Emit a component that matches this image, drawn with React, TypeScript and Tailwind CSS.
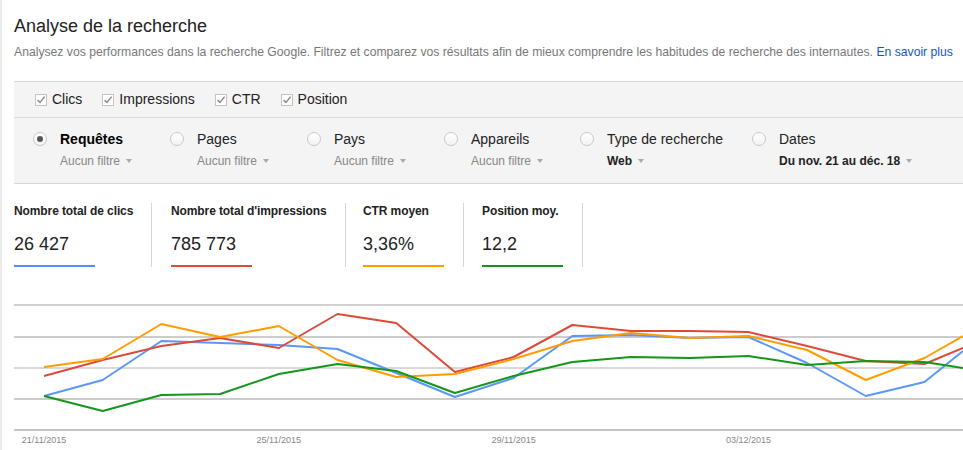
import React from "react";

const metrics = ["Clics", "Impressions", "CTR", "Position"];

const dims = [
  { label: "Requêtes", value: "Aucun filtre", selected: true, w: "w-[137px]" },
  { label: "Pages", value: "Aucun filtre", w: "w-[137px]" },
  { label: "Pays", value: "Aucun filtre", w: "w-[137px]" },
  { label: "Appareils", value: "Aucun filtre", w: "w-[136px]" },
  { label: "Type de recherche", value: "Web", strong: true, w: "w-[172px]" },
  { label: "Dates", value: "Du nov. 21 au déc. 18", strong: true, w: "w-[200px]" },
];

const stats = [
  { label: "Nombre total de clics", value: "26 427", color: "border-[#4d90fe]", box: "w-[118px] pr-[19px]" },
  { label: "Nombre total d'impressions", value: "785 773", color: "border-[#dd4b39]", box: "w-[154px] pl-[19px] pr-[20px]" },
  { label: "CTR moyen", value: "3,36%", color: "border-[#ff9900]", box: "w-[81px] pl-[17px] pr-[19px]" },
  { label: "Position moy.", value: "12,2", color: "border-[#109618]", box: "w-[81px] pl-[18px] pr-[19px]" },
];

// screen y values, last one is the value at the right edge
const series = [
  { color: "#5b97f7", ys: [397, 381, 342, 344, 346, 350, 374, 398, 379, 337, 336, 339, 338, 364, 397, 383, 352] },
  { color: "#dc4b3a", ys: [377, 361, 347, 339, 349, 315, 324, 373, 358, 326, 332, 332, 333, 347, 362, 365, 349] },
  { color: "#ff9c00", ys: [368, 360, 325, 338, 327, 361, 378, 375, 360, 342, 334, 339, 337, 351, 381, 359, 337] },
  { color: "#15961b", ys: [397, 412, 396, 395, 375, 365, 372, 394, 377, 363, 358, 359, 357, 366, 362, 363, 369] },
];

const xAt = (i: number) => (i === 16 ? 949 : 30 + 58.7 * i);

function Checkbox() {
  return (
    <svg width="12" height="12" viewBox="0 0 12 12" className="shrink-0">
      <rect x="0.5" y="0.5" width="11" height="11" fill="#fff" stroke="#c4c4c4" />
      <path d="M2.6 6.1 L5 8.4 L9.6 2.6" stroke="#8e8e8e" strokeWidth="1.5" fill="none" />
    </svg>
  );
}

function Radio({ on }: { on?: boolean }) {
  return (
    <div className="mt-[2px] flex h-[14px] w-[14px] shrink-0 items-center justify-center rounded-full border border-[#c8c8c8] bg-gradient-to-b from-white to-[#f3f3f3]">
      {on && <div className="h-[6px] w-[6px] rounded-full bg-[#555]" />}
    </div>
  );
}

function Chart() {
  const grid = [
    { y: 6, c: "#a0a0a0", w: 1 },
    { y: 38, c: "#cccccc", w: 2 },
    { y: 69, c: "#cccccc", w: 1.5 },
    { y: 100, c: "#cccccc", w: 2 },
    { y: 131, c: "#8a8a8a", w: 1 },
  ];
  const ticks = [
    { i: 0, t: "21/11/2015" },
    { i: 4, t: "25/11/2015" },
    { i: 8, t: "29/11/2015" },
    { i: 12, t: "03/12/2015" },
  ];
  return (
    <svg width="949" height="150" viewBox="0 0 949 150" className="block">
      {grid.map((g) => (
        <line key={g.y} x1="0" x2="949" y1={g.y} y2={g.y} stroke={g.c} strokeWidth={g.w} />
      ))}
      {series.map((s) => (
        <polyline
          key={s.color}
          fill="none"
          stroke={s.color}
          strokeWidth="2"
          strokeLinejoin="round"
          points={s.ys.map((y, i) => `${xAt(i)},${y - 300}`).join(" ")}
        />
      ))}
      {ticks.map((t) => (
        <text
          key={t.t}
          x={xAt(t.i)}
          y="144"
          textAnchor="middle"
          fontSize="9"
          fill="#888"
          fontFamily="'Liberation Sans', Arial, sans-serif"
        >
          {t.t}
        </text>
      ))}
    </svg>
  );
}

export default function App() {
  return (
    <div className="min-h-[450px] overflow-hidden border-l-2 border-[#ebebeb] bg-white font-['Liberation_Sans',Arial,sans-serif] text-[#222]">
      <div className="pl-3 pt-[15px]">
        <h1 className="text-[18px] leading-[22px] text-[#222]">Analyse de la recherche</h1>
        <p className="mt-[8px] whitespace-nowrap text-[12.2px] leading-[15px] text-[#777]">
          Analysez vos performances dans la recherche Google. Filtrez et comparez vos résultats afin de mieux
          comprendre les habitudes de recherche des internautes.{" "}
          <a className="text-[#1155cc]">En savoir plus</a>
        </p>

        <div className="mt-[21px] border-y border-[#d6d6d6] bg-[#f4f4f4]">
          <div className="flex h-[35px] items-center gap-[20px] pl-[21px] text-[14px]">
            {metrics.map((m) => (
              <label key={m} className="flex items-center gap-[5px]">
                <Checkbox />
                <span>{m}</span>
              </label>
            ))}
          </div>
          <div className="flex h-[66px] border-t border-[#dcdcdc] pl-[19px] pt-[12px]">
            {dims.map((d) => (
              <div key={d.label} className={`flex shrink-0 items-start gap-[13px] ${d.w}`}>
                <Radio on={d.selected} />
                <div>
                  <div className={`whitespace-nowrap text-[14px] leading-[18px] ${d.selected ? "font-bold text-black" : ""}`}>
                    {d.label}
                  </div>
                  <div className="mt-[5px] flex items-center whitespace-nowrap text-[12px] leading-[16px]">
                    <span className={d.strong ? "font-bold text-[#222]" : "text-[#888]"}>{d.value}</span>
                    <span className="ml-[6px] h-0 w-0 border-x-[3.5px] border-t-[4px] border-x-transparent border-t-[#aaa]" />
                  </div>
                </div>
              </div>
            ))}
          </div>
        </div>

        <div className="flex pt-[19px]">
          {stats.map((s) => (
            <div key={s.label} className={`box-content shrink-0 border-r border-[#d4d4d4] ${s.box}`}>
              <div className="whitespace-nowrap text-[12px] font-bold leading-[16px] tracking-[-0.1px] text-[#222]">
                {s.label}
              </div>
              <div className={`mt-[14px] w-[81px] border-b-2 pb-[10px] text-[18px] leading-[22px] text-[#222] ${s.color}`}>
                {s.value}
              </div>
            </div>
          ))}
        </div>

        <div className="mt-[32px]">
          <Chart />
        </div>
      </div>
    </div>
  );
}
